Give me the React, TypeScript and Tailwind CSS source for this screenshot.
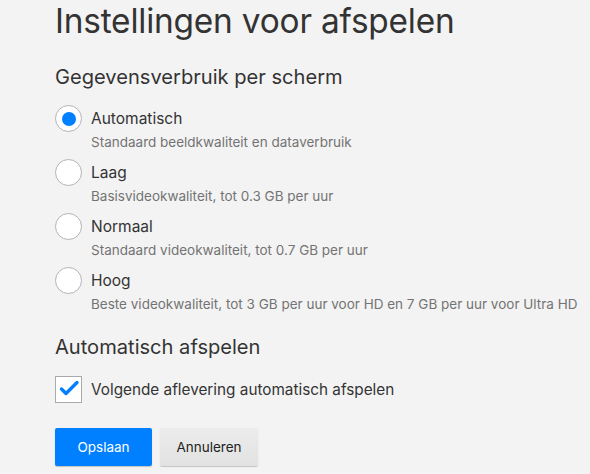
const options = [
  { label: "Automatisch", desc: "Standaard beeldkwaliteit en dataverbruik", checked: true },
  { label: "Laag", desc: "Basisvideokwaliteit, tot 0.3 GB per uur", checked: false },
  { label: "Normaal", desc: "Standaard videokwaliteit, tot 0.7 GB per uur", checked: false },
  { label: "Hoog", desc: "Beste videokwaliteit, tot 3 GB per uur voor HD en 7 GB per uur voor Ultra HD", checked: false },
];

export default function App() {
  return (
    <div className="w-[590px] h-[474px] overflow-hidden bg-[#f3f3f3] text-[#333] font-['Inter','Liberation_Sans',sans-serif]">
      <div className="pl-[55px]">
        <h1 className="text-[33.4px] leading-[40px] pt-[1px] tracking-[-0.2px]">Instellingen voor afspelen</h1>
        <h2 className="mt-[23px] text-[20.1px] leading-[26px]">Gegevensverbruik per scherm</h2>

        <div className="mt-[15px] flex flex-col gap-[8px]">
          {options.map((o) => (
            <div key={o.label} className="flex items-start gap-[9px]">
              <div className="w-[27px] h-[27px] rounded-full bg-white border border-[#b3b3b3] flex items-center justify-center shrink-0">
                {o.checked && <div className="w-[14px] h-[14px] rounded-full bg-[#0080ff]" />}
              </div>
              <div className="flex flex-col">
                <span className="text-[15.5px] leading-[27px]">{o.label}</span>
                <span className="mt-[2px] text-[13.5px] leading-[17px] text-[#737373]">{o.desc}</span>
              </div>
            </div>
          ))}
        </div>

        <h2 className="mt-[21px] text-[20.1px] leading-[26px]">Automatisch afspelen</h2>

        <div className="mt-[16px] flex items-center gap-[9px]">
          <div className="w-[27px] h-[27px] bg-white border border-[#aaaaaa] shrink-0">
            <svg width="25" height="25" viewBox="0 0 25 25" fill="none">
              <path d="M5.5 12 L10 16.5 L21 5.5" stroke="#0080ff" strokeWidth="3.4" strokeLinecap="round" strokeLinejoin="round" />
            </svg>
          </div>
          <span className="text-[15.3px] leading-[27px]">Volgende aflevering automatisch afspelen</span>
        </div>

        <div className="mt-[25px] flex gap-[8px]">
          <button className="w-[97px] h-[38px] bg-[#0080ff] text-white text-[13.5px] rounded-[2px] shadow-[0_1px_1px_rgba(0,0,0,0.2)]">Opslaan</button>
          <button className="w-[98px] h-[38px] bg-gradient-to-b from-[#ececec] to-[#e2e2e2] text-[#222] text-[13.5px] rounded-[2px] shadow-[0_1px_1px_rgba(0,0,0,0.2)]">Annuleren</button>
        </div>
      </div>
    </div>
  );
}
